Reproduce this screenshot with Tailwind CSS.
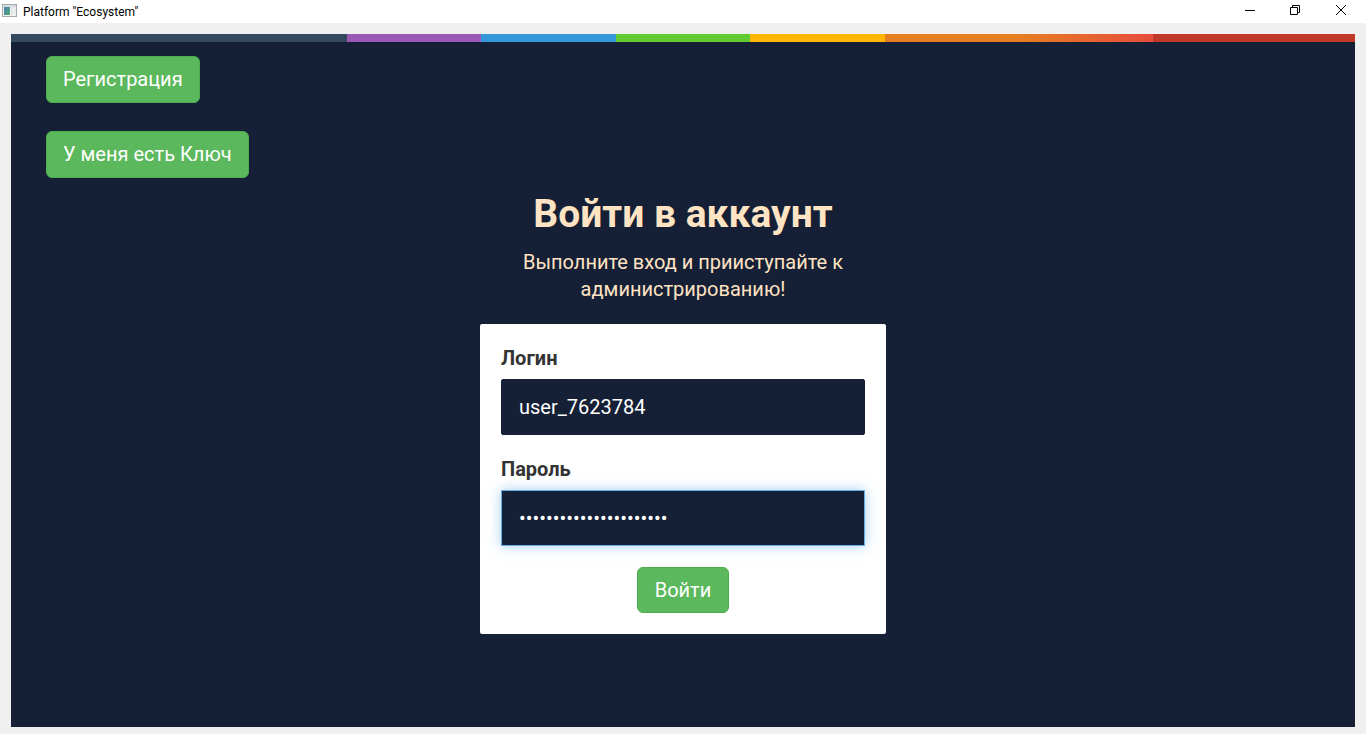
<!DOCTYPE html>
<html lang="ru">
  <head>
    <meta charset="UTF-8" />
    <meta name="viewport" content="width=device-width, initial-scale=1.0" />
    <title>Platform "Ecosystem"</title>
    <script src="https://cdn.jsdelivr.net/npm/@tailwindcss/browser@4"></script>
  </head>
  <body
    class="flex flex-col min-h-screen bg-[#f0f0f0] font-[Roboto,sans-serif] text-xl leading-7"
  >
    <!-- title bar -->
    <header class="flex items-center h-[23px] bg-white text-black">
      <svg class="w-4 h-4 ml-[2px] mb-px" viewBox="0 0 16 16">
        <defs>
          <linearGradient id="app-icon" x1="0" y1="0" x2="1" y2="1">
            <stop offset="0" stop-color="#4a7fb5" />
            <stop offset="1" stop-color="#55ab68" />
          </linearGradient>
        </defs>
        <rect x="0.5" y="1.5" width="14" height="12" fill="#f4f4f4" stroke="#a3a9ad" />
        <rect x="1" y="2" width="13" height="2" fill="#d5dade" />
        <rect x="2" y="4" width="6" height="8" fill="url(#app-icon)" />
        <rect x="9" y="4" width="2" height="8" fill="#dfe3e5" />
        <rect x="12" y="4" width="2" height="8" fill="#e8ebec" />
      </svg>
      <h1 class="ml-[5px] text-xs">Platform "Ecosystem"</h1>
      <div class="flex h-full ml-auto">
        <button type="button" aria-label="Свернуть" class="flex justify-center w-[46px] pt-[5px]">
          <svg class="w-[10px] h-[10px]" viewBox="0 0 10 10" fill="none" stroke="#000">
            <path d="M0 5.5h10" />
          </svg>
        </button>
        <button type="button" aria-label="Развернуть" class="flex justify-center w-11 pt-[5px]">
          <svg class="w-[10px] h-[10px]" viewBox="0 0 10 10" fill="none" stroke="#000">
            <path d="M0.5 2.5h7v7h-7zM2.5 2.5v-2h7v7h-2" />
          </svg>
        </button>
        <button type="button" aria-label="Закрыть" class="flex justify-center w-12 pt-[5px] mr-px">
          <svg class="w-[10px] h-[10px]" viewBox="0 0 10 10" fill="none" stroke="#000">
            <path d="M0 0l10 10M10 0L0 10" />
          </svg>
        </button>
      </div>
    </header>

    <main class="grow mx-[11px] mt-[11px] mb-[7px] bg-[#151f36]">
      <div
        class="h-2 bg-[linear-gradient(to_right,#34495e_25%,#9b59b6_25%,#9b59b6_35%,#3498db_35%,#3498db_45%,#62cb31_45%,#62cb31_55%,#ffb606_55%,#ffb606_65%,#e67e22_65%,#e67e22_75%,#e74c3c_85%,#c0392b_85%)]"
      ></div>

      <nav class="flex flex-col items-start gap-7 pt-[14px] pl-[35px]">
        <button
          type="button"
          class="h-[47px] px-4 pb-0.5 border border-[#4cae4c] rounded-md bg-[#5cb85c] text-white"
        >
          Регистрация
        </button>
        <button
          type="button"
          class="h-[47px] px-4 pb-0.5 border border-[#4cae4c] rounded-md bg-[#5cb85c] text-white"
        >
          У меня есть Ключ
        </button>
      </nav>

      <section class="w-[406px] mx-auto mt-[13px]">
        <div class="px-5 text-center text-[#ffe4c4]">
          <h2 class="text-[39px] leading-[47px] font-bold">Войти в аккаунт</h2>
          <p class="mt-[11px] leading-[27px]">
            Выполните вход и прииступайте к администрированию!
          </p>
        </div>

        <form class="mt-[21px] p-[21px] rounded-xs bg-white text-[#333]">
          <label for="login" class="block leading-[27px] font-bold">Логин</label>
          <input
            type="text"
            id="login"
            value="user_7623784"
            class="w-full h-14 mt-[7px] px-[17px] border border-[#151f36] rounded-xs bg-[#151f36] text-white outline-none"
          />
          <label for="password" class="block mt-[21px] leading-[27px] font-bold">Пароль</label>
          <input
            type="password"
            id="password"
            value="passwordpasswordpasswo"
            class="w-full h-14 mt-[7px] px-[17px] border border-[#66afe9] bg-[#151f36] text-white outline-none shadow-[0_0_12px_rgba(102,175,233,0.6)]"
          />
          <button
            type="submit"
            class="block h-[46px] mt-[21px] mx-auto px-[17px] border border-[#4cae4c] rounded-md bg-[#5cb85c] text-white"
          >
            Войти
          </button>
        </form>
      </section>
    </main>
  </body>
</html>
